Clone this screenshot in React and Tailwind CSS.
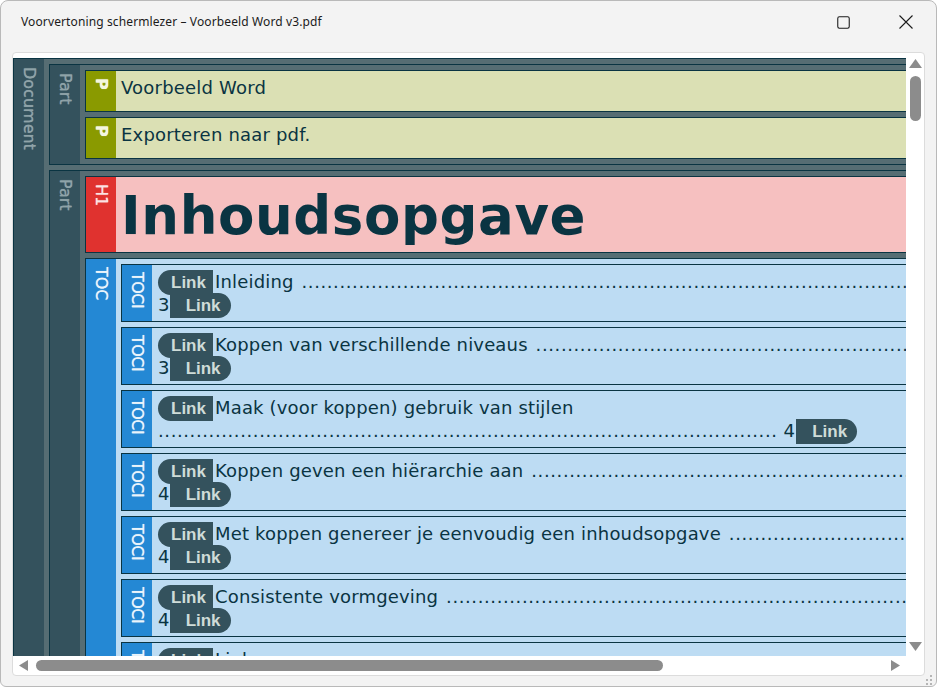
import React from 'react';

const DOTS = '.'.repeat(170);
const dejavu = "font-['DejaVu_Sans',sans-serif]";

const tocRows = [
  { title: 'Inleiding', page: '3' },
  { title: 'Koppen van verschillende niveaus', page: '3' },
  { title: 'Maak (voor koppen) gebruik van stijlen', page: '4', wrapped: true },
  { title: 'Koppen geven een hiërarchie aan', page: '4' },
  { title: 'Met koppen genereer je eenvoudig een inhoudsopgave', page: '4' },
  { title: 'Consistente vormgeving', page: '4' },
  { title: 'Links', page: '5' },
];

function VerticalLabel({ text, className }) {
  return (
    <div className={`w-[30px] shrink-0 flex justify-start items-center [writing-mode:vertical-rl] [text-shadow:0_0_0.7px_currentColor] ${className}`}>
      {text}
    </div>
  );
}

function Container({ label, children }) {
  return (
    <div className="flex border border-[#0a3442] bg-[#566d73]">
      <VerticalLabel text={label} className="bg-[#34525d] pt-[8px] text-[16px] text-[#8fa3a8]" />
      <div className="flex-1 min-w-0 flex flex-col gap-[5px] p-[5px]">{children}</div>
    </div>
  );
}

function Para({ text }) {
  return (
    <div className="flex h-[42px] border border-[#0a3442] bg-[#dbe0b4]">
      <VerticalLabel text="P" className="bg-[#8a9a00] pt-[7px] text-[16px] font-bold text-[#f4f6df]" />
      <div className="pl-[5px] pt-[5px] text-[18px] leading-[24px] tracking-[0.2px] text-[#0a3442]">{text}</div>
    </div>
  );
}

function LinkStart() {
  return (
    <span className="relative h-[25px] w-[55px] shrink-0 rounded-l-full bg-[#34525d] pl-[13px] font-['Liberation_Sans',sans-serif] text-[17px] font-bold leading-[25px] tracking-normal text-[#cfdcd8]">
      Link
    </span>
  );
}

function LinkEnd() {
  return (
    <span className="relative h-[25px] w-[61px] shrink-0 rounded-r-full bg-[#34525d] pl-[16px] font-['Liberation_Sans',sans-serif] text-[17px] font-bold leading-[25px] tracking-normal text-[#cfdcd8]">
      Link
    </span>
  );
}

function TocRow({ title, page, wrapped }) {
  return (
    <div className="flex h-[58px] shrink-0 border border-[#0a3442] bg-[#bddcf3]">
      <VerticalLabel text="TOCI" className="bg-[#2488d4] pt-[7px] text-[16px] tracking-[-0.5px] text-[#eaf4fb]" />
      <div className="flex-1 min-w-0 pt-[5px] pl-[6px] text-[18px] leading-[23px] tracking-[0.17px] text-[#0a3442] whitespace-pre">
        <div className="flex h-[23px] items-start">
          <LinkStart />
          <span className="pl-[2px]">{title}{wrapped ? '' : ' '}</span>
          {!wrapped && <span className="pl-[2px] tracking-[0.6px]">{DOTS}</span>}
        </div>
        <div className="flex h-[23px] items-start">
          {wrapped && <span className="tracking-[0.6px]">{DOTS.slice(0, 98)}</span>}
          {wrapped && <span className="w-[6px]" />}
          <span>{page}</span>
          <span className={wrapped ? 'w-[1px]' : ''} />
          <LinkEnd />
        </div>
      </div>
    </div>
  );
}

function Triangle({ dir }) {
  const points = {
    up: '6.5,0 13,9 0,9',
    down: '0,0 13,0 6.5,9',
    left: '9,0 9,11 0,5.5',
    right: '0,0 9,5.5 0,11',
  }[dir];
  const box = dir === 'up' || dir === 'down' ? '0 0 13 9' : '0 0 9 11';
  const size = dir === 'up' || dir === 'down' ? 'w-[13px] h-[9px]' : 'w-[9px] h-[11px]';
  return (
    <svg viewBox={box} className={`${size} shrink-0`}>
      <polygon points={points} fill="#8c8c8c" />
    </svg>
  );
}

export default function App() {
  return (
    <div className="h-[687px] w-[937px] overflow-hidden bg-white">
      <div className="relative flex h-[687px] flex-col rounded-t-[8px] rounded-b-[6px] border border-[#b9b9b9] bg-[#f3f3f3]">
        {/* title bar */}
        <div className="flex h-[51px] shrink-0 items-start pl-[20px] pt-[12px]">
          <div className="font-['Noto_Sans',sans-serif] text-[12px] leading-[18px] tracking-[0.12px] text-[#1b1b1b]">
            Voorvertoning schermlezer – Voorbeeld Word v3.pdf
          </div>
          <div className="ml-auto flex items-center pt-[2px] pr-[23px]">
            <svg viewBox="0 0 12 12" className="h-[13px] w-[13px]" fill="none" stroke="#1b1b1b" strokeWidth="1">
              <rect x="0.7" y="0.7" width="10.6" height="10.6" rx="1.5" />
            </svg>
            <svg viewBox="0 0 14 14" className="ml-[49px] h-[14px] w-[14px]" fill="none" stroke="#1b1b1b" strokeWidth="1.1">
              <path d="M0.5 0.5L13.5 13.5M13.5 0.5L0.5 13.5" />
            </svg>
          </div>
        </div>

        {/* preview panel */}
        <div className="mx-[11px] flex h-[624px] flex-col rounded-[4px] border border-[#dcdcdc] bg-white">
          <div className="flex min-h-0 flex-1 pt-[5px]">
            <div className={`${dejavu} min-w-0 h-[598px] flex-1 overflow-hidden`}>
              <div className="w-[1220px]">
                <Container label="Document">
                  <Container label="Part">
                    <Para text="Voorbeeld Word" />
                    <Para text="Exporteren naar pdf." />
                  </Container>
                  <Container label="Part">
                    <div className="flex h-[77px] border border-[#0a3442] bg-[#f6c0c0]">
                      <VerticalLabel text="H1" className="bg-[#e0322f] pt-[7px] text-[16px] text-[#fbe3e3]" />
                      <div className="pl-[5px] text-[53px] font-bold leading-[78px] tracking-[0.6px] text-[#0a3442]">Inhoudsopgave</div>
                    </div>
                    <div className="flex border border-[#0a3442] bg-[#bddcf3]">
                      <VerticalLabel text="TOC" className="bg-[#2488d4] pt-[8px] text-[16px] text-[#eaf4fb]" />
                      <div className="flex-1 min-w-0 flex flex-col gap-[5px] p-[5px]">
                        {tocRows.map((row) => (
                          <TocRow key={row.title} {...row} />
                        ))}
                      </div>
                    </div>
                  </Container>
                </Container>
              </div>
            </div>

            {/* vertical scrollbar */}
            <div className="flex w-[18px] shrink-0 flex-col items-center pt-[1px]">
              <Triangle dir="up" />
              <div className="mt-[8px] h-[45px] w-[11px] rounded-full bg-[#8c8c8c]" />
              <div className="mt-auto mb-[5px]">
                <Triangle dir="down" />
              </div>
            </div>
          </div>

          {/* horizontal scrollbar */}
          <div className="flex h-[19px] shrink-0 items-center pl-[6px] pr-[24px]">
            <Triangle dir="left" />
            <div className="ml-[8px] h-[11px] w-[627px] rounded-full bg-[#8c8c8c]" />
            <div className="ml-auto">
              <Triangle dir="right" />
            </div>
          </div>
        </div>

        {/* resize grip */}
        <svg viewBox="0 0 10 10" className="absolute bottom-[1px] right-[2px] h-[10px] w-[10px]" fill="#b5b5b5">
          <rect x="6" y="0" width="2" height="2" />
          <rect x="2" y="4" width="2" height="2" />
          <rect x="6" y="4" width="2" height="2" />
          <rect x="2" y="8" width="2" height="2" />
          <rect x="6" y="8" width="2" height="2" />
        </svg>
      </div>
    </div>
  );
}
